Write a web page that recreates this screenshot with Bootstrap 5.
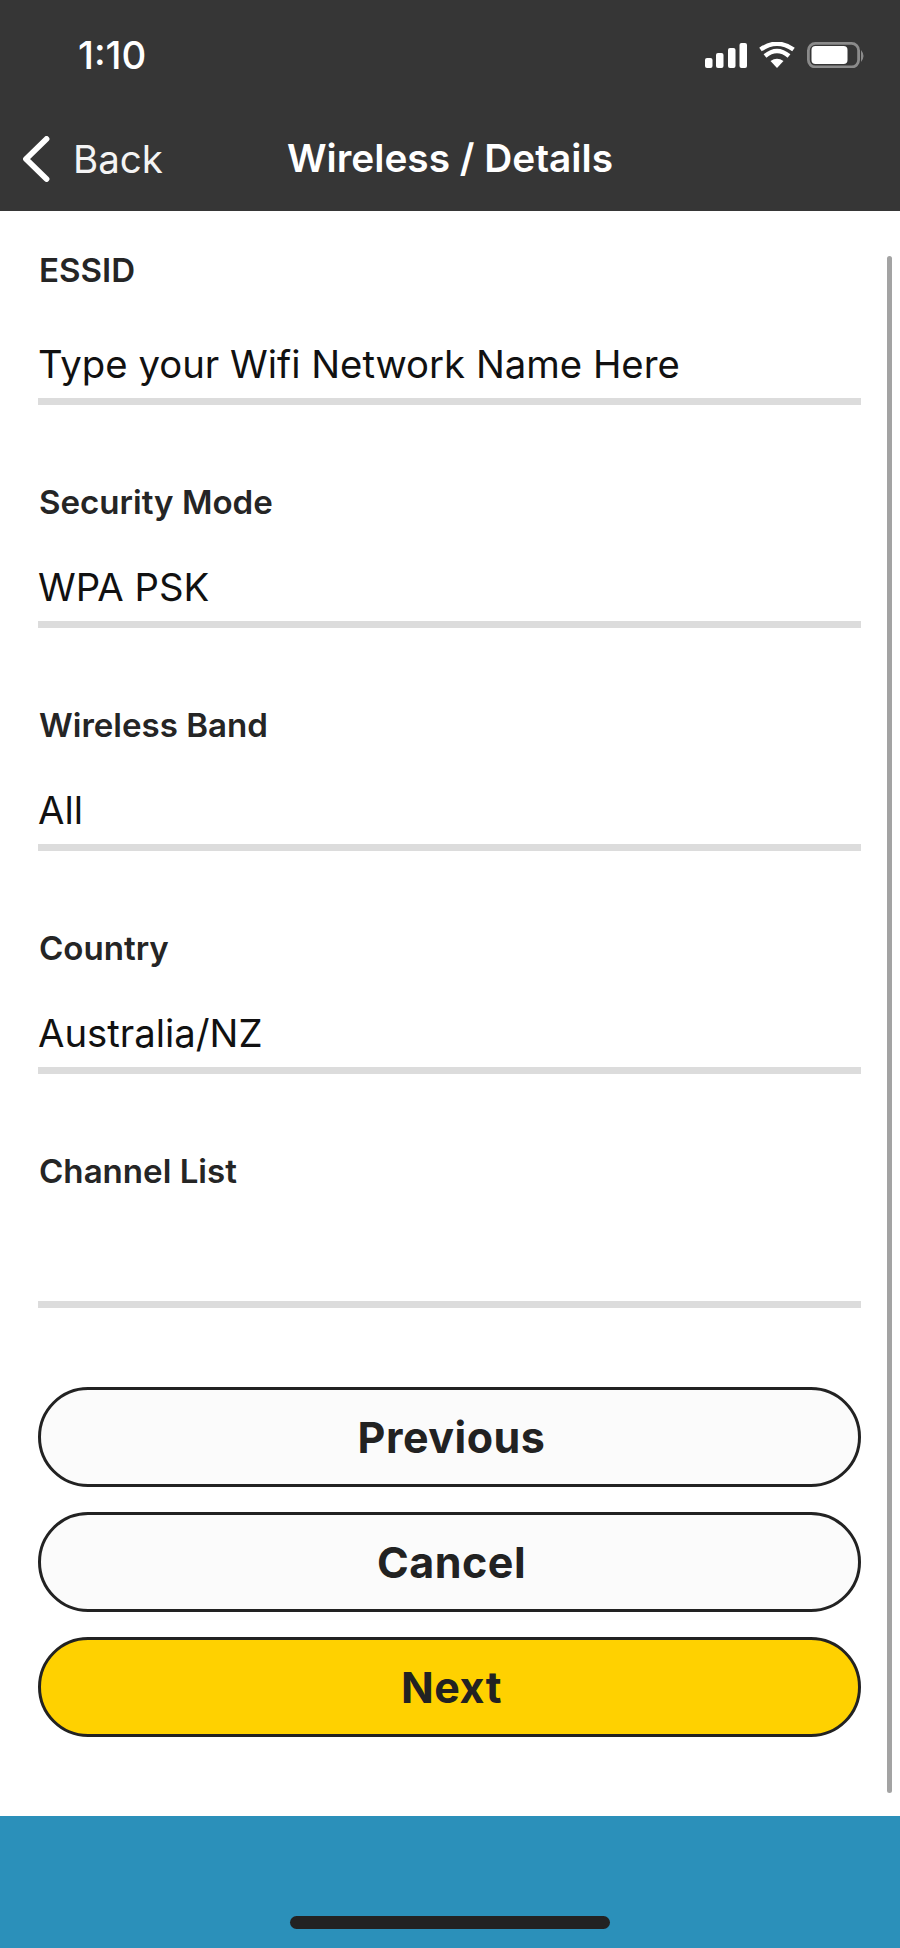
<!DOCTYPE html>
<html lang="en">
<head>
<meta charset="utf-8">
<title>Wireless / Details</title>
<link href="https://cdn.jsdelivr.net/npm/bootstrap@5.3.0/dist/css/bootstrap.min.css" rel="stylesheet">
<style>
html,body{height:1948px;overflow:hidden}
body{font-family:Inter,"Liberation Sans",sans-serif;background:#fff;color:#222}
.app-head{background:#363636;height:211px;color:#fff;flex:none}
.status-row{height:113px;padding:42px 34px 0 78px}
.status-time{font-size:38.4px;font-weight:500;line-height:26px}
.title-row{height:98px}
.back-link{left:22px;top:23px;color:#f4f4f4;font-size:38.5px;font-weight:400;line-height:44px;gap:23px}
.head-title{font-size:38.8px;font-weight:600;line-height:44px;padding-top:23px;padding-left:0;margin:0}
.app-body{height:1605px;padding:42px 39px 0 38px;background:#fff}
.scroll-thumb{position:absolute;left:887px;top:45px;width:5px;height:1537px;background:#a3a3a3;border-radius:3px}
.field-label{font-size:33.1px;font-weight:600;line-height:34px;color:#252525;margin:0 0 43px;padding-left:1px;display:block}
.field-value{font-size:38.3px;line-height:50px;height:59px;color:#111;border-bottom:7px solid #dcdcdc;box-sizing:content-box;margin-bottom:80px}
.field-first .field-label{margin-bottom:52px}
.field-last .field-value{height:70px;margin-bottom:79px}
.action-btn{height:100px;font-size:43px;font-weight:700;line-height:1;color:#222;background:#fbfbfb;border:3px solid #222;letter-spacing:.5px;padding-left:16px;padding-right:12px;display:flex;align-items:center;justify-content:center}
.action-next{background:#ffd100}
.action-stack{gap:25px}
.app-foot{background:#2b90ba;height:132px;padding-top:100px}
.home-bar{width:320px;height:13px;background:#222;border-radius:7px}
</style>
</head>
<body>
<div class="d-flex flex-column position-relative">
  <header class="app-head">
    <div class="status-row d-flex justify-content-between align-items-start">
      <span class="status-time">1:10</span>
      <svg width="161" height="26" viewBox="0 0 161 26" fill="none">
        <g fill="#fff">
          <rect x="0" y="16" width="7.5" height="10" rx="2"/>
          <rect x="11" y="11" width="7.5" height="15" rx="2"/>
          <rect x="23" y="6" width="7.5" height="20" rx="2"/>
          <rect x="34.5" y="1" width="7.5" height="25" rx="2"/>
          <path d="M72 26 L65.5 19 Q72 14.5 78.5 19 Z"/>
        </g>
        <g stroke="#fff" stroke-width="4.4" fill="none">
          <path d="M60 14 Q72 4 84 14"/>
          <path d="M55.5 7.5 Q72 -4 88.5 7.5"/>
        </g>
        <rect x="103.4" y="1.4" width="50.2" height="23.6" rx="7" stroke="#8b8b8b" stroke-width="2.8"/>
        <rect x="106.5" y="4" width="36" height="18" rx="4" fill="#fff"/>
        <path d="M156 8 Q161 14 156 20 Z" fill="#8b8b8b"/>
      </svg>
    </div>
    <div class="title-row position-relative text-center">
      <a class="back-link position-absolute d-flex align-items-center text-decoration-none" href="#">
        <svg width="28" height="46" viewBox="0 0 28 46" fill="none"><path d="M24.5 3 L4 23 L24.5 43" stroke="#fff" stroke-width="5.8" stroke-linecap="round" stroke-linejoin="round"/></svg>
        <span>Back</span>
      </a>
      <h1 class="head-title">Wireless / Details</h1>
    </div>
  </header>
  <main class="app-body position-relative">
    <div class="scroll-thumb"></div>
    <form>
      <div class="field-first">
        <label class="field-label">ESSID</label>
        <div class="field-value">Type your Wifi Network Name Here</div>
      </div>
      <div>
        <label class="field-label">Security Mode</label>
        <div class="field-value">WPA PSK</div>
      </div>
      <div>
        <label class="field-label">Wireless Band</label>
        <div class="field-value">All</div>
      </div>
      <div>
        <label class="field-label">Country</label>
        <div class="field-value">Australia/NZ</div>
      </div>
      <div class="field-last">
        <label class="field-label">Channel List</label>
        <div class="field-value"></div>
      </div>
      <div class="action-stack d-flex flex-column">
        <button type="button" class="btn action-btn rounded-pill w-100">Previous</button>
        <button type="button" class="btn action-btn rounded-pill w-100">Cancel</button>
        <button type="button" class="btn action-btn action-next rounded-pill w-100">Next</button>
      </div>
    </form>
  </main>
  <footer class="app-foot d-flex justify-content-center">
    <div class="home-bar"></div>
  </footer>
</div>
<script src="https://cdn.jsdelivr.net/npm/bootstrap@5.3.0/dist/js/bootstrap.bundle.min.js"></script>
</body>
</html>
